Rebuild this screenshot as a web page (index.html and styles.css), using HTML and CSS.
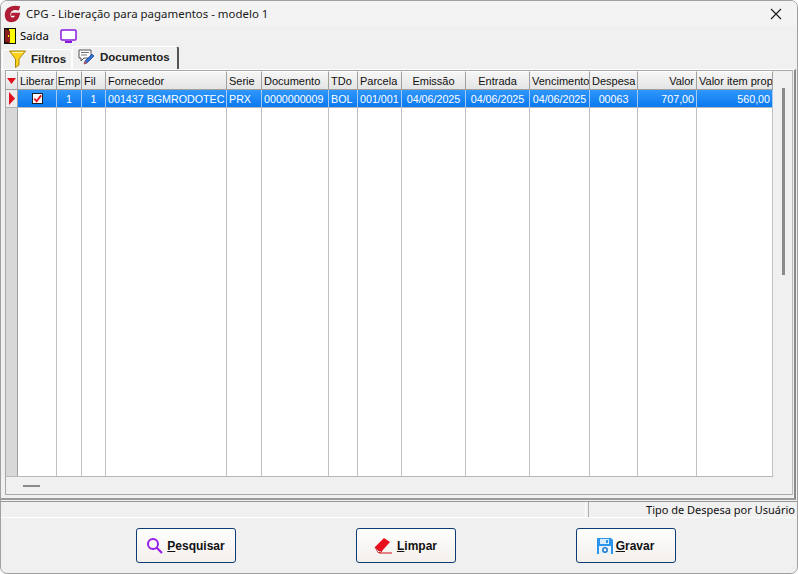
FILE: index.html
```html
<!DOCTYPE html>
<html lang="pt-BR">
<head>
<meta charset="utf-8">
<title>CPG - Liberação para pagamentos - modelo 1</title>
<link rel="stylesheet" href="styles.css">
</head>
<body>
<div class="window">
  <header class="titlebar">
    <svg class="logo" width="18" height="18" viewBox="0 0 20 20"><path d="M18 1.500C13 0 7 .5 3.500 4 .5 7.500 .2 12 1.800 15.500c1.500 3 4.700 4 8 3.500 3.500-.6 6-3 7.200-6.500l1-4H8.500L7.500 12h4.800c-.8 1.800-3 2.600-4.300 1.400C6.600 12 6.800 8.500 8.500 7c2-1.800 5-1.800 8-.8z" fill="#b01c34"/></svg>
    <span class="title">CPG - Liberação para pagamentos - modelo 1</span>
    <svg class="close" width="12" height="12" viewBox="0 0 12 12"><path d="M1 1l10 10M11 1L1 11" stroke="#1a1a1a" stroke-width="1.100" fill="none"/></svg>
  </header>
  <nav class="toolbar">
    <svg class="exit" width="12" height="16" viewBox="0 0 12 16"><rect width="12" height="16" fill="#111"/><rect x="5" y="1" width="6" height="14" fill="#ffff00"/><path d="M1 1l5 2v12l-5-1z" fill="#8c1c1c"/><rect x="4" y="7" width="1" height="2" fill="#ffff00"/></svg>
    <span class="tool-label">Saída</span>
    <svg class="monitor" width="17" height="14" viewBox="0 0 17 14"><rect x="1" y="1" width="15" height="10" rx="1" fill="#fff" stroke="#8a18e0" stroke-width="1.500"/><rect x="5" y="12" width="7" height="2" fill="#8a18e0"/></svg>
  </nav>
  <div class="tabs">
    <div class="tab">
      <svg width="17" height="18" viewBox="0 0 17 18"><path d="M.5 1h16L10 9v6l-3.500 2.500V9z" fill="#ffd21e" stroke="#a8880c"/><path d="M3 2.500h11" stroke="#fff6b0"/></svg>
      <span>Filtros</span>
    </div>
    <div class="tab tab-active">
      <svg width="17" height="16" viewBox="0 0 17 16"><path d="M1 1h12v8H6l-3 3V9H1z" fill="#fff" stroke="#555"/><path d="M3 3.500h8M3 6h6" stroke="#777"/><path d="M6 15l1-3 7-7 2 2-7 7z" fill="#2f6fd8" stroke="#1b3f86" stroke-width=".7"/><path d="M6 15l1-3 2 2z" fill="#e8503a"/></svg>
      <span>Documentos</span>
    </div>
  </div>
  <main class="panel">
    <div class="grid-wrap">
      <div class="grid-main">
        <div class="grid">
          <div class="hd corner"><svg width="9" height="6" viewBox="0 0 9 6"><path d="M0 0h9L4.500 6z" fill="#e0101c"/></svg></div>
          <div class="hd ctr">Liberar</div>
          <div class="hd ctr">Emp</div>
          <div class="hd">Fil</div>
          <div class="hd">Fornecedor</div>
          <div class="hd">Serie</div>
          <div class="hd">Documento</div>
          <div class="hd">TDo</div>
          <div class="hd">Parcela</div>
          <div class="hd ctr">Emissão</div>
          <div class="hd ctr">Entrada</div>
          <div class="hd">Vencimento</div>
          <div class="hd">Despesa</div>
          <div class="hd rgt">Valor</div>
          <div class="hd">Valor item prop</div>

          <div class="ind"><svg width="6" height="13" viewBox="0 0 6 13"><path d="M0 0l6 6.500L0 13z" fill="#e0101c"/></svg></div>
          <div class="cell ctr"><span class="check"><svg width="10" height="10" viewBox="0 0 10 10"><path d="M1.500 4.500l2.500 3 5-6.500" stroke="#e0101c" stroke-width="2" fill="none"/></svg></span></div>
          <div class="cell ctr">1</div>
          <div class="cell ctr">1</div>
          <div class="cell">001437 BGMRODOTEC</div>
          <div class="cell">PRX</div>
          <div class="cell">0000000009</div>
          <div class="cell">BOL</div>
          <div class="cell">001/001</div>
          <div class="cell ctr">04/06/2025</div>
          <div class="cell ctr">04/06/2025</div>
          <div class="cell ctr">04/06/2025</div>
          <div class="cell ctr">00063</div>
          <div class="cell rgt">707,00</div>
          <div class="cell rgt">560,00</div>

          <div class="ind-empty"></div><div class="bl"></div><div class="bl"></div><div class="bl"></div><div class="bl"></div><div class="bl"></div><div class="bl"></div><div class="bl"></div><div class="bl"></div><div class="bl"></div><div class="bl"></div><div class="bl"></div><div class="bl"></div><div class="bl"></div><div class="bl"></div>
        </div>
        <div class="hscroll"><span class="hthumb"></span></div>
      </div>
      <div class="vscroll"><span class="vthumb"></span></div>
    </div>
  </main>
  <div class="status">
    <div class="st-left"></div>
    <div class="st-right">Tipo de Despesa por Usuário</div>
  </div>
  <footer class="actions">
    <button class="btn">
      <svg width="18" height="18" viewBox="0 0 18 18"><circle cx="7" cy="7" r="5" fill="none" stroke="#9a1ee6" stroke-width="2"/><path d="M10.500 10.500L16 16" stroke="#9a1ee6" stroke-width="2.200"/></svg>
      <span><u>P</u>esquisar</span>
    </button>
    <button class="btn">
      <svg width="20" height="17" viewBox="0 0 20 17"><path d="M1 10l9-9 6 4-8 9H5z" fill="#e8101c"/><path d="M1 10l4 4h3l-1.500 1.500H4z" fill="#fff" stroke="#c01018" stroke-width=".8"/><path d="M5 16h13" stroke="#d01018"/></svg>
      <span><u>L</u>impar</span>
    </button>
    <button class="btn">
      <svg width="16" height="16" viewBox="0 0 16 16"><path d="M0 0h14l2 2v14H0z" fill="#2c96ec"/><rect x="3" y="1" width="9" height="5" fill="#d6ecfb"/><rect x="9" y="2" width="2" height="3" fill="#2c96ec"/><rect x="2" y="8" width="12" height="8" fill="#e8f4fc"/><circle cx="8" cy="12" r="2.200" fill="none" stroke="#1f78c8" stroke-width="1.500"/></svg>
      <span><u>G</u>ravar</span>
    </button>
  </footer>
</div>
</body>
</html>
```
FILE: styles.css
```css
* { box-sizing: border-box; }
html, body { margin: 0; padding: 0; }
body { width: 798px; height: 574px; background: #fff; overflow: hidden; }
.window {
  width: 798px; height: 574px; display: flex; flex-direction: column;
  background: #f0f0f0; border: 1px solid #a0a0a0; border-radius: 7px; overflow: hidden;
  font-family: "Liberation Sans", Arial, sans-serif; font-size: 12px; color: #000;
}
.titlebar { height: 25px; flex: none; display: flex; align-items: center; padding: 0 15px 0 3px; background: #f3f3f3; }
.logo { flex: none; }
.title { margin-left: 4px; font-family: "Noto Sans", sans-serif; font-size: 11.450px; color: #1a1a1a; }
.close { margin-left: auto; }
.toolbar { height: 19px; flex: none; display: flex; align-items: center; padding-left: 3px; }
.tool-label { margin-left: 4px; font-family: "Noto Sans", sans-serif; font-size: 11.300px; }
.monitor { margin-left: 11px; }
.tabs { height: 24px; flex: none; display: flex; align-items: flex-end; padding-left: 1px; }
.tab {
  width: 70px; height: 20px; display: flex; align-items: center; gap: 5px; padding: 0 0 2px 6px;
  border: 1px solid #fff; border-bottom: 0; border-radius: 3px 3px 0 0; font-weight: 700; font-size: 11.500px; color: #222;
}
.tab-active { width: 107px; height: 23px; padding: 0 0 3px 5px; border-color: #fff #555 #fff #fff; border-right-width: 2px; background: #f0f0f0; }
.panel { height: 431px; flex: none; margin: 0 1px 0 0; padding: 0 1px 3px 4px; border-top: 1px solid #fff; border-right: 2px solid #8a8a8a; border-bottom: 2px solid #9a9a9a; }
.grid-wrap { height: 100%; display: flex; border: 1px solid #a8a8a8; border-right-color: #bbb; }
.grid-main { width: 767px; flex: none; display: flex; flex-direction: column; }
.grid {
  flex: 1; min-height: 0; display: grid; background: #fff; border-bottom: 1px solid #b8b8b8;
  grid-template-columns: 12px 39px 25px 24px 121px 35px 67px 29px 44px 64px 64px 60px 48px 59px 76px;
  grid-template-rows: 19px 18px 1fr;
}
.hd {
  display: flex; align-items: center; padding: 0 2px; background: linear-gradient(#f6f6f6, #e4e4e4);
  border-right: 1px solid #a0a0a0; border-bottom: 1px solid #a0a0a0; border-top: 1px solid #fff; white-space: nowrap; overflow: hidden; font-size: 11px; color: #111;
}
.corner { justify-content: center; padding: 0; }
.ctr { justify-content: center; }
.rgt { justify-content: flex-end; }
.ind { display: flex; align-items: center; padding-left: 3px; background: #ececec; border-right: 1px solid #a0a0a0; border-bottom: 1px solid #b0b0b0; }
.cell {
  display: flex; align-items: center; padding: 0 2px; background: linear-gradient(#2f97fb, #0a78f0); color: #fff; font-size: 10.700px;
  border-right: 1px solid #a6c8ee; border-bottom: 1px solid #b8b8b8; white-space: nowrap; overflow: hidden;
}
.check { width: 11px; height: 11px; display: flex; align-items: center; justify-content: center; background: #fff; border: 1px solid #222; }
.ind-empty { background: #d8d8d8; border-right: 1px solid #a0a0a0; }
.bl { background: #fff; border-right: 1px solid #c0c0c0; }
.hscroll { height: 17px; flex: none; display: flex; align-items: center; padding-left: 17px; }
.hthumb { width: 17px; height: 2px; background: #8a8a8a; }
.vscroll { flex: 1; position: relative; }
.vthumb { position: absolute; left: 9px; top: 17px; width: 3px; height: 187px; background: #8a8a8a; }
.status { height: 17px; flex: none; display: flex; margin-top: 1px; border-top: 1px solid #9a9a9a; border-bottom: 1px solid #fff; }
.st-left { width: 585px; flex: none; border-right: 1px solid #fff; }
.st-right { flex: 1; margin-left: 2px; padding-right: 2px; text-align: right; border-left: 1px solid #b0b0b0; font-family: "Noto Sans", sans-serif; font-size: 11px; line-height: 15px; color: #111; }
.actions { flex: 1; display: flex; justify-content: center; gap: 120px; padding-top: 10px; padding-left: 13px; }
.btn {
  width: 100px; height: 35px; display: flex; align-items: center; justify-content: center; gap: 3px; padding: 0;
  border: 1px solid #0c3c74; border-radius: 3px; background: linear-gradient(#ffffff, #f3efec);
  font-family: "Liberation Sans", Arial, sans-serif; font-size: 12px; font-weight: 700; color: #111;
}
```
